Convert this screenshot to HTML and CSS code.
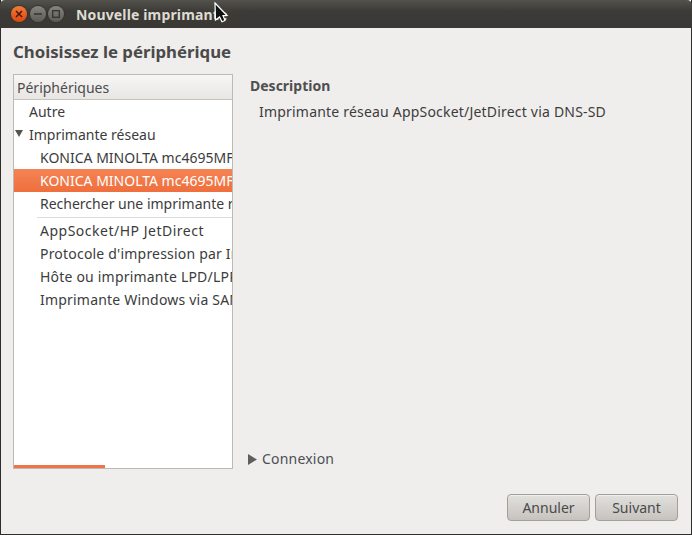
FILE: index.html
```html
<!DOCTYPE html>
<html lang="fr">
<head>
    <meta charset="UTF-8">
    <title>Nouvelle imprimante</title>
    <link rel="stylesheet" href="styles.css">
</head>
<body>
    <div class="window">
        <div class="titlebar">
            <div class="controls">
                <span class="control close">
                    <svg width="8" height="8" viewBox="0 0 8 8"><path d="M1 1L7 7M7 1L1 7" stroke="#4a1c08" stroke-width="1.6"/></svg>
                </span>
                <span class="control">
                    <svg width="8" height="8" viewBox="0 0 8 8"><path d="M0 4H8" stroke="#383733" stroke-width="1.6"/></svg>
                </span>
                <span class="control">
                    <svg width="8" height="8" viewBox="0 0 8 8"><rect x="0.7" y="0.7" width="6.6" height="6.6" fill="none" stroke="#383733" stroke-width="1.4"/></svg>
                </span>
            </div>
            <div class="title">Nouvelle imprimante</div>
        </div>

        <div class="content">
            <h1 class="heading">Choisissez le périphérique</h1>

            <div class="panes">
                <div class="device-list">
                    <div class="list-header">Périphériques</div>
                    <div class="list-body">
                        <div class="row level-1">Autre</div>
                        <div class="row level-1">
                            <svg class="expander" width="8" height="7" viewBox="0 0 8 7"><path d="M0 0H8L4 7Z"/></svg>
                            Imprimante réseau
                        </div>
                        <div class="row level-2">KONICA MINOLTA mc4695MF</div>
                        <div class="row level-2 selected">KONICA MINOLTA mc4695MF</div>
                        <div class="row level-2">Rechercher une imprimante réseau</div>
                        <div class="separator"></div>
                        <div class="row level-2 wide">AppSocket/HP JetDirect</div>
                        <div class="row level-2 loose">Protocole d'impression par Internet</div>
                        <div class="row level-2 loose">Hôte ou imprimante LPD/LPR</div>
                        <div class="row level-2 loose">Imprimante Windows via SAMBA</div>
                    </div>
                    <div class="scrollbar"></div>
                </div>

                <div class="details">
                    <div class="details-title">Description</div>
                    <div class="details-text">Imprimante réseau AppSocket/JetDirect via DNS-SD</div>
                    <div class="connexion">
                        <svg width="9" height="11" viewBox="0 0 9 11"><path d="M0 0L9 5.5L0 11Z"/></svg>
                        Connexion
                    </div>
                </div>
            </div>

            <div class="actions">
                <button class="button">Annuler</button>
                <button class="button">Suivant</button>
            </div>
        </div>
    </div>

    <svg class="cursor" width="15" height="21" viewBox="0 0 15 21">
        <path d="M1 1L13 13.5H9L11 18.5L8 19.8L5.6 15L1.5 18Z" fill="#111" stroke="#fff" stroke-width="1.2"/>
    </svg>
</body>
</html>
```

FILE: styles.css
```css
html, body {
    margin: 0;
    height: 100%;
    overflow: hidden;
}

body {
    font-family: "Noto Sans", "Open Sans", sans-serif;
    font-size: 14px;
    color: #3c3c3c;
    background-color: #f0eeec;
}

.window {
    height: 535px;
    display: flex;
    flex-direction: column;
    box-sizing: border-box;
    border-left: 1px solid #2f2e2b;
    border-right: 1px solid #2f2e2b;
    border-bottom: 1px solid #2f2e2b;
}

.titlebar {
    height: 28px;
    margin: 0 -1px;
    flex-shrink: 0;
    display: flex;
    align-items: center;
    background: linear-gradient(#53524c, #3c3b37 40%, #393834);
    border-radius: 5px 5px 0 0;
}

.controls {
    display: flex;
    gap: 2.5px;
    margin-left: 11px;
}

.control {
    width: 16px;
    height: 16px;
    border-radius: 50%;
    display: flex;
    align-items: center;
    justify-content: center;
    background: linear-gradient(#85847f, #5c5b56);
    box-shadow: 0 0 0 1px #35342f;
}

.close {
    background: linear-gradient(#f47a3c, #d9480f);
}

.title {
    margin-left: 12px;
    font-size: 14px;
    font-weight: bold;
    color: #dfdbd2;
    letter-spacing: 0.15px;
}

.content {
    flex: 1;
    min-height: 0;
    display: flex;
    flex-direction: column;
    padding: 13px 13px 13px 12px;
}

.heading {
    margin: 0 0 11px;
    font-size: 16.8px;
    line-height: 22px;
    font-weight: bold;
    color: #4a4a4a;
}

.panes {
    height: 395px;
    display: flex;
    gap: 17px;
}

.device-list {
    width: 220px;
    box-sizing: border-box;
    flex-shrink: 0;
    position: relative;
    display: flex;
    flex-direction: column;
    overflow: hidden;
    background-color: #fff;
    border: 1px solid #bdbab5;
}

.list-header {
    height: 24px;
    flex-shrink: 0;
    padding-left: 3px;
    line-height: 25px;
    color: #4c4c4c;
    background: linear-gradient(#f7f6f5, #e8e6e3);
    border-bottom: 1px solid #c6c3be;
}

.row {
    position: relative;
    height: 23px;
    line-height: 23px;
    white-space: nowrap;
    overflow: hidden;
    color: #3c3c3c;
}

.level-1 {
    padding-left: 15px;
}

.level-2 {
    padding-left: 26px;
}

.wide {
    letter-spacing: 0.5px;
}

.loose {
    letter-spacing: 0.2px;
}

.selected {
    color: #fff;
    background: linear-gradient(#f58354, #ef6f3d);
}

.expander {
    position: absolute;
    left: 1px;
    top: 7px;
    fill: #55544f;
}

.separator {
    height: 1px;
    margin: 2px 0 1px 23px;
    background-color: #dedcd9;
}

.scrollbar {
    position: absolute;
    left: 0;
    bottom: 0;
    width: 91px;
    height: 3px;
    background-color: #ef7548;
}

.details {
    flex: 1;
    display: flex;
    flex-direction: column;
}

.details-title {
    margin-top: 2px;
    font-weight: bold;
    line-height: 20px;
    color: #4f4f4f;
}

.details-text {
    margin: 6px 0 0 9px;
    line-height: 20px;
    letter-spacing: 0.2px;
}

.connexion {
    margin-top: auto;
    display: flex;
    align-items: center;
    gap: 5px;
    line-height: 20px;
    letter-spacing: 0.2px;
    color: #4a4f55;
}

.connexion svg {
    margin-left: -2px;
    fill: #5f5e5a;
}

.actions {
    margin-top: auto;
    display: flex;
    justify-content: flex-end;
    gap: 5px;
}

.button {
    width: 83px;
    height: 27px;
    padding: 0;
    font-family: inherit;
    font-size: 14px;
    color: #4a4a4a;
    background: linear-gradient(#e2e0dd, #c6c3bf);
    border: 1px solid #a3a09b;
    border-radius: 4px;
    box-shadow: inset 0 1px 0 #efeeec;
}

.cursor {
    position: absolute;
    left: 214px;
    top: 2px;
}
```
